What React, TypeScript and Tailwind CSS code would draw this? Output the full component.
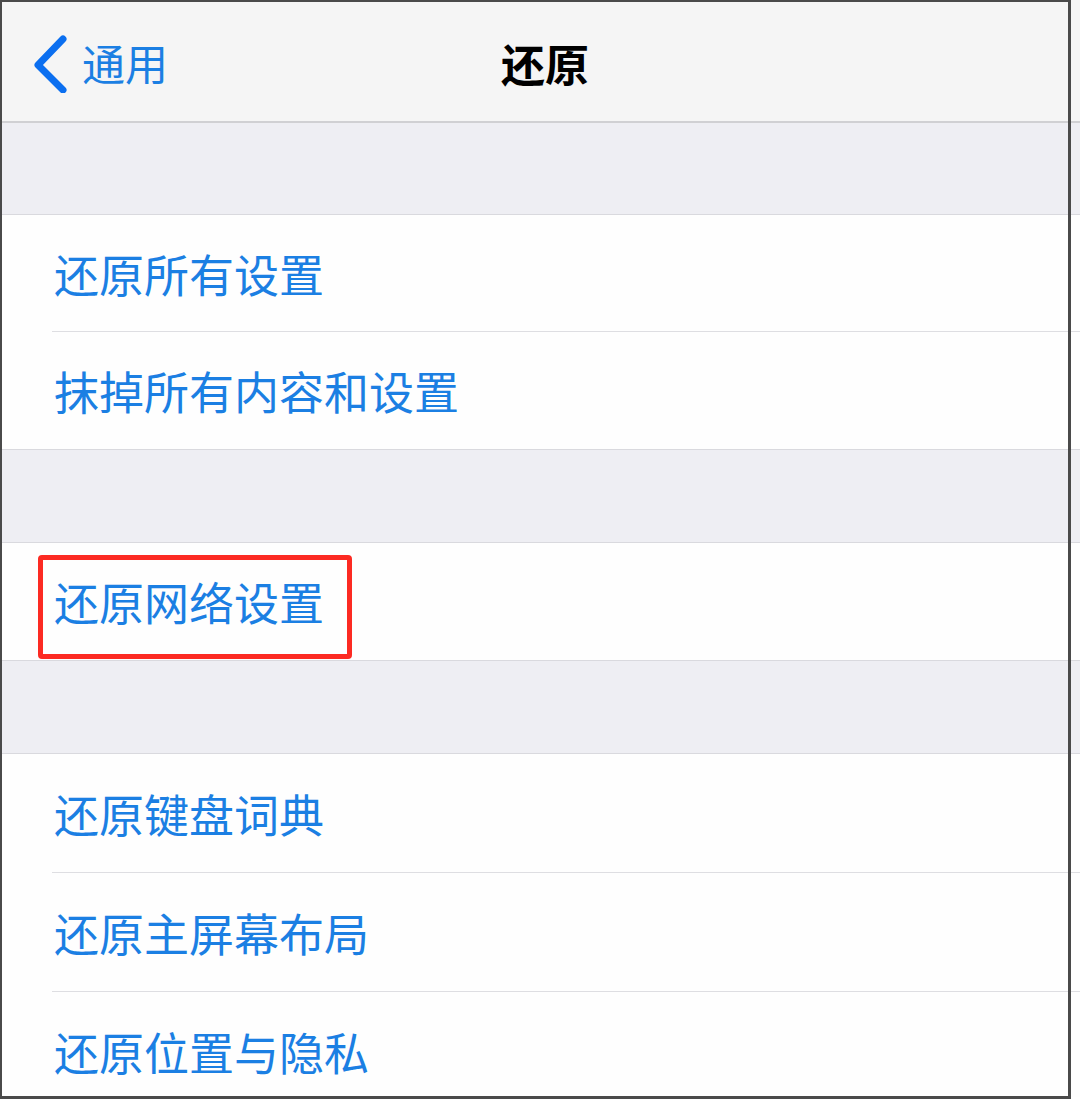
import React from "react";

const font = { fontFamily: '"Noto Sans CJK SC", "Noto Sans", sans-serif' };

function Row({ label, last, highlight, tall }: { label: string; last?: boolean; highlight?: boolean; tall?: boolean }) {
  return (
    <div className={`relative shrink-0 bg-[#fefefe] pl-[52px] ${tall ? "h-[119px]" : "h-[117px]"}`}>
      <div className={`flex h-full items-center ${last ? "" : "border-b border-[#dedee2]"}`}>
        <span className="pl-[2px] text-[45px] leading-none text-[#1b7fe3]">{label}</span>
      </div>
      {highlight && (
        <div className="pointer-events-none absolute left-[38px] top-[12px] h-[104px] w-[314px] rounded-[4px] border-[5px] border-[#fc2a22]" />
      )}
    </div>
  );
}

function Gap() {
  return <div className="h-[92px] shrink-0 bg-[#eeeef3]" />;
}

export default function App() {
  return (
    <div className="relative h-[1107px] w-[1080px] bg-white" style={font}>
      <div className="flex h-[1097px] w-[1080px] flex-col overflow-hidden">
        <div className="grid h-[123px] shrink-0 grid-cols-[1fr_auto_1fr] items-center border-b-2 border-[#d0d0d3] bg-[#f5f5f5] pl-[10px]">
          <div className="flex items-center">
            <svg width="40" height="58" viewBox="0 0 40 58" className="ml-[20px] mt-[6px]">
              <path d="M33 4 L8 30 L33 55" fill="none" stroke="#0b6ff0" strokeWidth="7" strokeLinecap="round" strokeLinejoin="round" />
            </svg>
            <span className="ml-[12px] mt-[4px] text-[43px] leading-none text-[#1b7fe3]">通用</span>
          </div>
          <div className="mt-[4px] text-[44px] font-bold leading-none text-black">还原</div>
          <div />
        </div>
        <div className="h-[91px] shrink-0 bg-[#eeeef3]" />
        <div className="shrink-0 border-y border-[#d9d9de]">
          <Row label="还原所有设置" />
          <Row label="抹掉所有内容和设置" last />
        </div>
        <Gap />
        <div className="shrink-0 border-y border-[#d9d9de]">
          <Row label="还原网络设置" last highlight />
        </div>
        <Gap />
        <div className="shrink-0 border-t border-[#d9d9de]">
          <Row label="还原键盘词典" tall />
          <Row label="还原主屏幕布局" tall />
          <Row label="还原位置与隐私" last tall />
        </div>
      </div>
      <div className="pointer-events-none absolute left-0 top-0 h-[1099px] w-[1071px] border-b-[3px] border-l-2 border-r-[3px] border-t-2 border-[#4a4a4a]" />
    </div>
  );
}
